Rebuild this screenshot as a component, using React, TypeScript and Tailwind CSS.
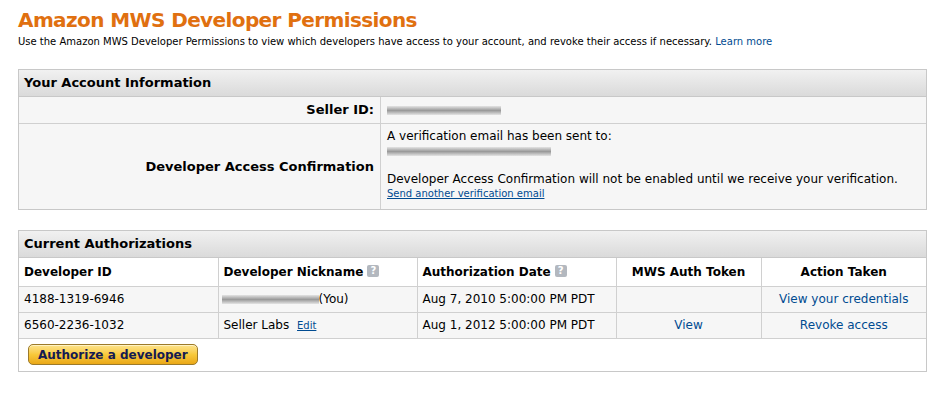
import React from "react";

const Blur = ({ w }: { w: string }) => (
  <span className={`inline-block h-[9px] ${w} bg-linear-to-b from-[#e4e4e4] via-[#9a9a9a] to-[#e4e4e4] blur-[0.6px] align-middle`} />
);

const Help = () => (
  <span className="inline-flex items-center justify-center w-[12px] h-[12px] rounded-[2px] bg-[#b3b8bf] text-white text-[10px] font-bold leading-none ml-[4px] align-[2px]">?</span>
);

const Header = ({ title }: { title: string }) => (
  <div className="h-[27px] flex items-center px-[5px] bg-linear-to-b from-[#f1f1f1] to-[#dadada] border-b border-[#c8c8c8] font-bold text-[13px]">
    {title}
  </div>
);

const cell = "border-[#d0d0d0] px-[5px]";

export default function App() {
  return (
    <div className="bg-white min-h-[397px] px-[18px] pt-[6px] text-black" style={{ fontFamily: '"DejaVu Sans", Verdana, sans-serif' }}>
      <h1 className="text-[20px] font-bold text-[#e07010] leading-[28px] tracking-[-0.6px]">Amazon MWS Developer Permissions</h1>
      <p className="text-[10px] leading-[14px] mt-[1px]">
        Use the Amazon MWS Developer Permissions to view which developers have access to your account, and revoke their access if necessary.{" "}
        <a className="text-[#004b91]">Learn more</a>
      </p>

      <div className="mt-[20px] w-[909px] border border-[#c8c8c8]">
        <Header title="Your Account Information" />
        <div className="flex h-[27px] bg-[#f6f6f6] border-b border-[#d0d0d0] text-[12px]">
          <div className="w-[362px] border-r border-[#d0d0d0] flex items-center justify-end pr-[6px] font-bold text-[13px]">Seller ID:</div>
          <div className="flex items-center px-[6px]"><Blur w="w-[114px]" /></div>
        </div>
        <div className="flex h-[85px] bg-[#f6f6f6] text-[12px]">
          <div className="w-[362px] border-r border-[#d0d0d0] flex items-center justify-end pr-[6px] font-bold text-[13px]">Developer Access Confirmation</div>
          <div className="px-[6px] pt-[5px] leading-[15px]">
            <div>A verification email has been sent to:</div>
            <div className="h-[14px] flex items-center"><Blur w="w-[164px]" /></div>
            <div className="h-[14px]" />
            <div>Developer Access Confirmation will not be enabled until we receive your verification.</div>
            <a className="block text-[10px] leading-[14px] text-[#004b91] underline">Send another verification email</a>
          </div>
        </div>
      </div>

      <div className="mt-[20px] w-[909px] border border-[#c8c8c8]">
        <Header title="Current Authorizations" />
        <table className="w-full border-collapse text-[12px]">
          <thead>
            <tr className="h-[28px] bg-white text-[12px] font-bold border-b border-[#d0d0d0]">
              <th className={`${cell} w-[199px] text-left border-r`}>Developer ID</th>
              <th className={`${cell} w-[199px] text-left border-r`}>Developer Nickname<Help /></th>
              <th className={`${cell} w-[199px] text-left border-r`}>Authorization Date<Help /></th>
              <th className={`${cell} w-[145px] text-center border-r`}>MWS Auth Token</th>
              <th className={`${cell} text-center`}>Action Taken</th>
            </tr>
          </thead>
          <tbody>
            <tr className="h-[26px] bg-[#f6f6f6] border-b border-[#d0d0d0]">
              <td className={`${cell} border-r`}>4188-1319-6946</td>
              <td className={`${cell} border-r`}><span className="ml-[-2px]"><Blur w="w-[97px]" /></span>(You)</td>
              <td className={`${cell} border-r`}>Aug 7, 2010 5:00:00 PM PDT</td>
              <td className={`${cell} border-r text-center`}></td>
              <td className={`${cell} text-center text-[#004b91]`}>View your credentials</td>
            </tr>
            <tr className="h-[26px] bg-[#f6f6f6] border-b border-[#d0d0d0]">
              <td className={`${cell} border-r`}>6560-2236-1032</td>
              <td className={`${cell} border-r`}>Seller Labs <a className="ml-[4px] text-[10px] text-[#004b91] underline">Edit</a></td>
              <td className={`${cell} border-r`}>Aug 1, 2012 5:00:00 PM PDT</td>
              <td className={`${cell} border-r text-center text-[#004b91]`}>View</td>
              <td className={`${cell} text-center text-[#004b91]`}>Revoke access</td>
            </tr>
            <tr className="h-[33px] bg-white">
              <td colSpan={5} className="px-[9px]">
                <button className="h-[21px] px-[9px] rounded-[5px] border border-[#9c7a2a] bg-linear-to-b from-[#fde38a] via-[#f8c93a] to-[#eaa816] text-[12px] font-bold text-[#141a52] leading-none shadow-[inset_0_1px_0_#fff3c4]">
                  Authorize a developer
                </button>
              </td>
            </tr>
          </tbody>
        </table>
      </div>
    </div>
  );
}
